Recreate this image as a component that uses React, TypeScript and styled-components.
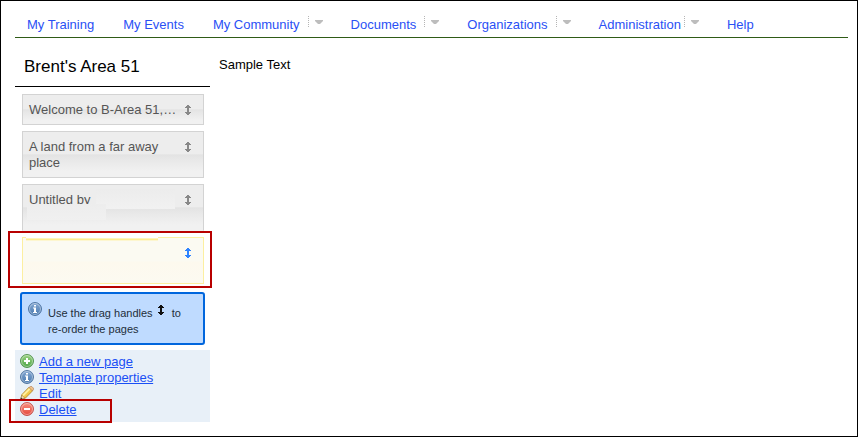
import React from "react";
import styled, { createGlobalStyle, css } from "styled-components";

const GlobalStyle = createGlobalStyle`
  * { box-sizing: border-box; }
  body {
    margin: 0;
    background: #fff;
    color: #000;
    font: 13px/16px "Liberation Sans", Arial, sans-serif;
  }
`;

const Frame = styled.div`
  min-height: 100vh;
  border: 1px solid #000;
  padding: 8px 9px 12px 14px;
`;

const NavBar = styled.nav`
  display: flex;
  align-items: flex-start;
  height: 29px;
  border-bottom: 1px solid #2f5b16;
`;

const NavItem = styled.div<{ $menu?: boolean }>`
  display: flex;
  padding: 7px ${(p) => (p.$menu ? 16 : 17)}px 0 12px;
  white-space: nowrap;
`;

const NavLink = styled.a`
  padding-top: 1px;
  color: #2a50f5;
  text-decoration: none;
`;

const MenuButton = styled.button<{ $tight?: boolean }>`
  display: flex;
  width: 15px;
  height: 11px;
  margin: 0 0 0 ${(p) => (p.$tight ? 3 : 8)}px;
  padding: 4px 0 0 6px;
  border: 0;
  border-left: 1px dotted #b5b5b5;
  background: none;
`;

const Columns = styled.div`
  display: grid;
  grid-template-columns: 195px minmax(0, 1fr);
`;

const Sidebar = styled.aside`
  display: flex;
  flex-direction: column;
`;

const Title = styled.h1`
  margin: 0;
  padding: 19px 9px 9px;
  border-bottom: 1px solid #000;
  font-size: 17px;
  line-height: 20px;
  font-weight: normal;
`;

const Content = styled.main`
  padding: 19px 9px;
`;

const PageList = styled.ul`
  display: flex;
  flex-direction: column;
  gap: 6px;
  margin: 7px 6px 0 7px;
  padding: 0;
  list-style: none;
`;

type Tone = "normal" | "open" | "selected";

const PageItem = styled.li<{ $tone: Tone }>`
  position: relative;
  display: flex;
  align-items: flex-start;
  min-height: 31px;
  padding: 7px 12px 6px 6px;
  border: 1px solid #d3d3d3;
  background: linear-gradient(#ededed 0 48%, #e3e3e3 51%, #e8e8e8 62%, #f1f1f1 88%);
  ${(p) =>
    p.$tone === "open" &&
    css`
      min-height: 47px;
      border-bottom-color: #f0f0f0;
    `}
  ${(p) =>
    p.$tone === "selected" &&
    css`
      min-height: 47px;
      border-color: #fcefa1;
      background: linear-gradient(#fbfaf2 0 50%, #fdf9ee 54%, #fcfaf1);
    `}
`;

const PageLink = styled.a`
  flex: 1;
  min-width: 0;
  padding-right: 8px;
  color: #555;
  text-decoration: none;
`;

const HandleButton = styled.button<{ $active?: boolean }>`
  display: flex;
  margin-top: 3px;
  padding: 0;
  border: 0;
  background: none;
  color: ${(p) => (p.$active ? "#2e83ff" : "#888")};
`;

const NamePatch = styled.span`
  position: absolute;
  top: 4px;
  left: 73px;
  width: 79px;
  height: 20px;
  background: linear-gradient(#ececec, #f1f1f1);
`;

const LinePatch = styled.span`
  position: absolute;
  top: 19px;
  left: 4px;
  width: 79px;
  height: 16px;
  background: linear-gradient(#ededed, #f0f0f0);
`;

const TopMark = styled.span`
  position: absolute;
  top: -1px;
  left: 3px;
  width: 132px;
  height: 4px;
  background: linear-gradient(#fff 0 1px, #fdf4bd 1px 2px, #fcec93 2px 3px, #fdf6cf 3px);
`;

const Outline = styled.span<{ $area: "page" | "action" }>`
  position: absolute;
  border: 2px solid #b80000;
  pointer-events: none;
  ${(p) =>
    p.$area === "page"
      ? css`
          inset: -7px -9px -5px -15px;
        `
      : css`
          top: -3px;
          left: -11px;
          width: 103px;
          height: 24px;
        `}
`;

const Hint = styled.div`
  display: flex;
  gap: 6px;
  margin: 8px 5px 5px;
  padding: 8px 6px 6px;
  border: 2px solid #0066dd;
  border-radius: 3px;
  background: #bfdbff;
  color: #222e3a;
  font-size: 11px;
`;

const HintText = styled.p`
  margin: 3px 0 0;
  svg { margin: 0 5px 0 2px; color: #111; vertical-align: 2px; }
`;

const Actions = styled.ul`
  margin: 0;
  padding: 4px 5px;
  background: #e8f0f8;
  list-style: none;
`;

const Action = styled.li`
  position: relative;
  display: flex;
  align-items: flex-start;
  gap: 5px;
  height: 16px;
`;

const ActionLink = styled.a<{ $plain?: boolean }>`
  color: #1a4ff5;
  text-decoration: ${(p) => (p.$plain ? "none" : "underline")};
`;

const Caret = () => (
  <svg width="8" height="4" viewBox="0 0 8 4" aria-hidden="true">
    <path d="M0 0h8v1L5 4H3L0 1z" fill="#bdbdbd" />
  </svg>
);

const DragIcon = () => (
  <svg width="6" height="10" viewBox="0 0 6 10" shapeRendering="crispEdges" aria-hidden="true">
    <path
      d="M2 0h2v1h1v1h1v1H4v4h2v1H5v1H4v1H2V9H1V8H0V7h2V3H0V2h1V1h1z"
      fill="currentColor"
    />
  </svg>
);

const rounds = {
  add: ["#9bd283", "#4da546", "#357f30"],
  info: ["#86a9d3", "#4878ae", "#365f90"],
  remove: ["#f99382", "#e5453b", "#b9342d"],
};

const RoundIcon = ({ kind, id }: { kind: keyof typeof rounds; id: string }) => {
  const [light, deep, rim] = rounds[kind];
  return (
    <svg width="14" height="14" viewBox="0 0 14 14" aria-hidden="true">
      <defs>
        <linearGradient id={id} x2="0" y2="1">
          <stop stopColor={light} />
          <stop offset="1" stopColor={deep} />
        </linearGradient>
      </defs>
      <circle cx="7" cy="7" r="6.500" fill={`url(#${id})`} stroke={rim} strokeOpacity=".75" />
      <circle cx="7" cy="7" r="5.500" fill="none" stroke="#fff" strokeOpacity=".5" strokeWidth=".8" />
      {kind === "add" && <path d="M6 4h2v2h2v2H8v2H6V8H4V6h2z" fill="#fff" />}
      {kind === "remove" && <path d="M4 6h6v2H4z" fill="#fff" />}
      {kind === "info" && <path d="M6 3h2v1.500H6zM5 5.500h3V10h1v1H5v-1h1V6.500H5z" fill="#fff" />}
    </svg>
  );
};

const PencilIcon = () => (
  <svg width="14" height="14" viewBox="0 0 14 14" aria-hidden="true">
    <path d="M.8 13.200l1-4.500L9 1.200l3.700 3.500L5.300 12.200z" fill="#f3c94c" stroke="#a98029" strokeWidth=".8" />
    <path d="M3 9.500l7-7" stroke="#fff0a0" strokeWidth="1.800" />
    <path d="M9 1.500L10.300.6q.9-.5 1.700.1L13.300 2q.6.800 0 1.700l-1 1.200z" fill="#f0c38c" stroke="#a9724f" strokeWidth=".6" />
    <path d="M.8 13.200l1-4 3 3z" fill="#f4dfbe" stroke="#96733c" strokeWidth=".5" />
    <path d="M.5 13.500l.5-2L2.500 13z" fill="#333" />
  </svg>
);

const navItems: { label: string; menu?: boolean; tight?: boolean }[] = [
  { label: "My Training" },
  { label: "My Events" },
  { label: "My Community", menu: true },
  { label: "Documents", menu: true },
  { label: "Organizations", menu: true },
  { label: "Administration", menu: true, tight: true },
  { label: "Help" },
];

const pages: { title: string; tone: Tone }[] = [
  { title: "Welcome to B-Area 51,…", tone: "normal" },
  { title: "A land from a far away place", tone: "normal" },
  { title: "Untitled by", tone: "open" },
  { title: "", tone: "selected" },
];

export default function App() {
  return (
    <>
      <GlobalStyle />
      <Frame>
        <NavBar>
          {navItems.map((item) => (
            <NavItem key={item.label} $menu={item.menu}>
              <NavLink href="#">{item.label}</NavLink>
              {item.menu && (
                <MenuButton $tight={item.tight} aria-label={`${item.label} menu`}>
                  <Caret />
                </MenuButton>
              )}
            </NavItem>
          ))}
        </NavBar>
        <Columns>
          <Sidebar>
            <Title>Brent's Area 51</Title>
            <PageList>
              {pages.map((page, i) => (
                <PageItem key={i} $tone={page.tone}>
                  <PageLink href="#" aria-label={page.title || "Selected page"}>
                    {page.title}
                  </PageLink>
                  <HandleButton $active={page.tone === "selected"} aria-label="Drag to re-order">
                    <DragIcon />
                  </HandleButton>
                  {page.tone === "open" && (
                    <>
                      <NamePatch />
                      <LinePatch />
                    </>
                  )}
                  {page.tone === "selected" && (
                    <>
                      <TopMark />
                      <Outline $area="page" />
                    </>
                  )}
                </PageItem>
              ))}
            </PageList>
            <Hint>
              <RoundIcon kind="info" id="hint-info" />
              <HintText>
                Use the drag handles <DragIcon /> to
                <br />
                re-order the pages
              </HintText>
            </Hint>
            <Actions>
              <Action>
                <RoundIcon kind="add" id="action-add" />
                <ActionLink href="#">Add a new page</ActionLink>
              </Action>
              <Action>
                <RoundIcon kind="info" id="action-info" />
                <ActionLink href="#">Template properties</ActionLink>
              </Action>
              <Action>
                <PencilIcon />
                <ActionLink href="#" $plain>
                  Edit
                </ActionLink>
              </Action>
              <Action>
                <RoundIcon kind="remove" id="action-delete" />
                <ActionLink href="#">Delete</ActionLink>
                <Outline $area="action" />
              </Action>
            </Actions>
          </Sidebar>
          <Content>Sample Text</Content>
        </Columns>
      </Frame>
    </>
  );
}
